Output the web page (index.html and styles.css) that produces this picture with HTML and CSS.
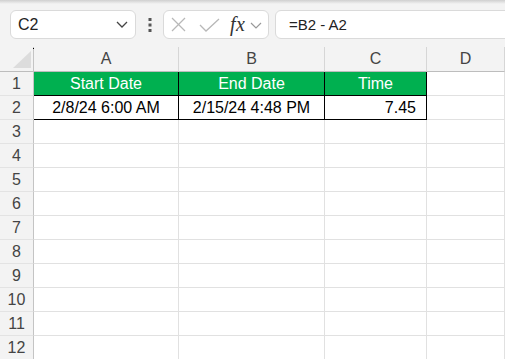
FILE: index.html
```html
<!DOCTYPE html>
<html>
<head>
    <title>Sheet</title>
    <link rel="stylesheet" href="styles.css">
</head>
<body>
    <div class="shadow"></div>

    <div class="toolbar">
        <div class="nameBox">
            <span>C2</span>
            <svg width="12" height="7" viewBox="0 0 12 7"><polyline points="1,1 6,6 11,1" fill="none" stroke="#444" stroke-width="1.3"/></svg>
        </div>
        <div class="grip">
            <svg width="4" height="14" viewBox="0 0 4 14">
                <rect x="0.5" y="0" width="3" height="3" fill="#555"/>
                <rect x="0.5" y="5.5" width="3" height="3" fill="#555"/>
                <rect x="0.5" y="11" width="3" height="3" fill="#555"/>
            </svg>
        </div>
        <div class="fxBox">
            <svg class="cancelIcon" width="15" height="15" viewBox="0 0 15 15">
                <line x1="1" y1="1" x2="14" y2="14" stroke="#b8b8b8" stroke-width="1.3"/>
                <line x1="14" y1="1" x2="1" y2="14" stroke="#b8b8b8" stroke-width="1.3"/>
            </svg>
            <svg class="enterIcon" width="21" height="14" viewBox="0 0 21 14">
                <polyline points="1,7 7,13 20,1" fill="none" stroke="#b8b8b8" stroke-width="1.3"/>
            </svg>
            <span class="fxLabel">fx</span>
            <svg class="fxMenu" width="12" height="7" viewBox="0 0 12 7"><polyline points="1,1 6,6 11,1" fill="none" stroke="#999" stroke-width="1.2"/></svg>
        </div>
        <div class="formulaBar">=B2 - A2</div>
    </div>

    <div class="sheet">
        <div class="corner">
            <span class="cornerDot"></span>
            <svg width="18" height="17" viewBox="0 0 18 17"><polygon points="18,0 18,17 0,17" fill="#dcdcdc"/></svg>
        </div>
        <div class="colHead">A</div>
        <div class="colHead">B</div>
        <div class="colHead">C</div>
        <div class="colHead">D</div>

        <div class="rowHead">1</div>
        <div class="cell title edge">Start Date</div>
        <div class="cell title edge">End Date</div>
        <div class="cell title edge">Time</div>
        <div class="cell"></div>

        <div class="rowHead">2</div>
        <div class="cell edge">2/8/24 6:00 AM</div>
        <div class="cell edge">2/15/24 4:48 PM</div>
        <div class="cell edge num">7.45</div>
        <div class="cell"></div>

        <div class="rowHead">3</div><div class="cell"></div><div class="cell"></div><div class="cell"></div><div class="cell"></div>
        <div class="rowHead">4</div><div class="cell"></div><div class="cell"></div><div class="cell"></div><div class="cell"></div>
        <div class="rowHead">5</div><div class="cell"></div><div class="cell"></div><div class="cell"></div><div class="cell"></div>
        <div class="rowHead">6</div><div class="cell"></div><div class="cell"></div><div class="cell"></div><div class="cell"></div>
        <div class="rowHead">7</div><div class="cell"></div><div class="cell"></div><div class="cell"></div><div class="cell"></div>
        <div class="rowHead">8</div><div class="cell"></div><div class="cell"></div><div class="cell"></div><div class="cell"></div>
        <div class="rowHead">9</div><div class="cell"></div><div class="cell"></div><div class="cell"></div><div class="cell"></div>
        <div class="rowHead">10</div><div class="cell"></div><div class="cell"></div><div class="cell"></div><div class="cell"></div>
        <div class="rowHead">11</div><div class="cell"></div><div class="cell"></div><div class="cell"></div><div class="cell"></div>
        <div class="rowHead">12</div><div class="cell"></div><div class="cell"></div><div class="cell"></div><div class="cell"></div>
    </div>
</body>
</html>
```

FILE: styles.css
```css
body {
    margin: 0;
    padding: 0;
    width: 505px;
    height: 359px;
    overflow: hidden;
    background-color: #f3f3f3;
    font-family: 'Liberation Sans', Arial, sans-serif;
}

.shadow {
    height: 4px;
    background: linear-gradient(#cfcfcf, #f3f3f3);
}

.toolbar {
    display: flex;
    align-items: center;
    padding: 6px 0 8px 10px;
    height: 29px;
}

.nameBox,
.fxBox,
.formulaBar {
    box-sizing: border-box;
    height: 29px;
    background-color: #fff;
    border: 1px solid #dadada;
    border-radius: 6px;
    display: flex;
    align-items: center;
}

.nameBox {
    width: 126px;
    padding: 0 7px;
    justify-content: space-between;
    font-size: 16px;
    color: #222;
}

.grip {
    width: 26px;
    display: flex;
    justify-content: center;
    padding-left: 1px;
}

.grip svg {
    display: block;
}

.fxBox {
    width: 106px;
    padding-left: 7px;
}

.fxBox svg {
    display: block;
}

.enterIcon {
    margin-left: 13px;
    margin-top: 1px;
}

.fxLabel {
    margin-left: 10px;
    font-family: 'Liberation Serif', 'DejaVu Serif', serif;
    font-style: italic;
    font-size: 20px;
    color: #333;
    letter-spacing: 0.5px;
}

.fxMenu {
    margin-left: 5px;
    margin-top: 1px;
}

.formulaBar {
    flex: 1;
    margin-left: 6px;
    margin-right: -12px;
    padding-left: 13px;
    font-size: 15px;
    color: #222;
}

.sheet {
    display: grid;
    grid-template-columns: 34px 145px 146px 102px 1fr;
    grid-template-rows: 25px repeat(12, 24px);
    background-color: #fff;
}

.corner {
    position: relative;
    box-sizing: border-box;
    border-right: 1px solid #c4c4c4;
    border-bottom: 1px solid #bdbdbd;
    background-color: #f3f3f3;
    display: flex;
    align-items: flex-end;
    justify-content: flex-end;
    padding: 0 2px 3px 0;
}

.corner svg {
    display: block;
}

.cornerDot {
    position: absolute;
    left: 33px;
    top: 1px;
    width: 1px;
    height: 1px;
    background-color: #000;
}

.colHead {
    box-sizing: border-box;
    background-color: #f3f3f3;
    border-right: 1px solid #d6d6d6;
    border-bottom: 1px solid #bdbdbd;
    text-align: center;
    font-size: 16px;
    line-height: 24px;
    color: #444;
}

.rowHead {
    box-sizing: border-box;
    background-color: #f3f3f3;
    border-right: 1px solid #c4c4c4;
    border-bottom: 1px solid #e3e3e3;
    text-align: center;
    font-size: 16px;
    line-height: 23px;
    color: #444;
}

.cell {
    box-sizing: border-box;
    border-right: 1px solid #e1e1e1;
    border-bottom: 1px solid #e1e1e1;
    text-align: center;
    font-size: 16px;
    line-height: 24px;
    color: #000;
    white-space: nowrap;
}

.cell.edge {
    border-right-color: #000;
    border-bottom-color: #000;
}

.cell.title {
    background-color: #00b050;
    color: #fff;
}

.cell.num {
    text-align: right;
    padding-right: 10px;
}
```
